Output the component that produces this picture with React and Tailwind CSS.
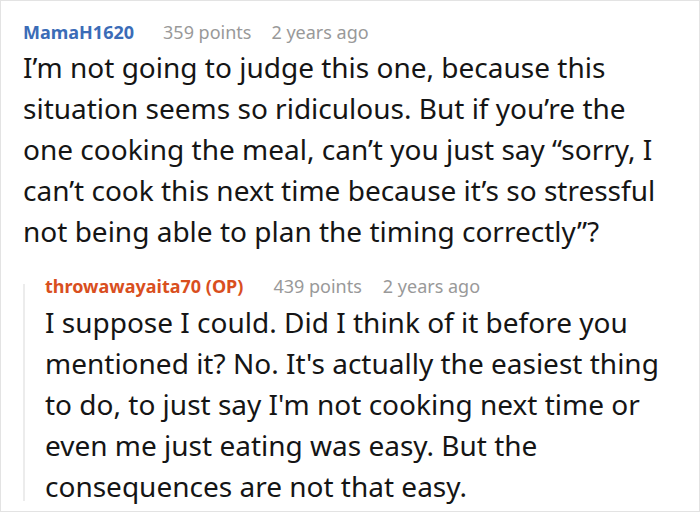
export default function App() {
  return (
    <div className="h-[520px] w-[700px] bg-white" style={{ fontFamily: '"Noto Sans", sans-serif' }}>
      <div className="h-[512px] border border-[#e3e3e3] pl-[22px] pr-[22px] pt-[18px]">
        <div className="flex items-center gap-[29px] text-[18px] leading-[26px]">
          <span className="font-bold text-[#3b6cb7]">MamaH1620</span>
          <span className="flex gap-[20px] text-[#999999]">
            <span>359 points</span>
            <span>2 years ago</span>
          </span>
        </div>
        <p className="mt-[2px] w-[656px] text-[28px] leading-[41px] text-[#151515]">
          I’m not going to judge this one, because this situation seems so ridiculous. But if you’re the one cooking the
          meal, can’t you just say “sorry, I can’t cook this next time because it’s so stressful not being able to plan
          the timing correctly”?
        </p>
        <div className="mt-[21px] flex">
          <div className="mb-[6px] mt-[11px] w-[2px] shrink-0 bg-[#ececec]" />
          <div className="pl-[20px]">
            <div className="flex items-center gap-[30px] text-[18px] leading-[26px]">
              <span className="font-bold text-[#d94f1e]">throwawayaita70 (OP)</span>
              <span className="flex gap-[21px] text-[#999999]">
                <span>439 points</span>
                <span>2 years ago</span>
              </span>
            </div>
            <p className="mt-[3px] w-[614px] text-[28px] leading-[41px] text-[#151515]">
              I suppose I could. Did I think of it before you mentioned it? No. It's actually the easiest thing to do, to
              just say I'm not cooking next time or even me just eating was easy. But the consequences are not that easy.
            </p>
          </div>
        </div>
      </div>
    </div>
  );
}
